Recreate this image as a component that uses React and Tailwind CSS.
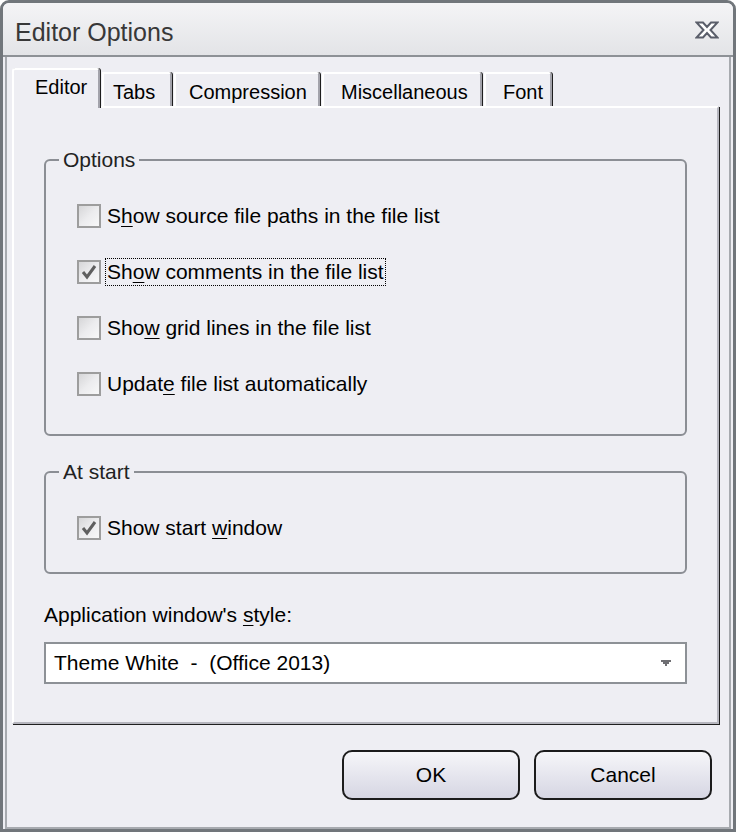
import React from "react";

const tabs = [
  { label: "Editor", w: "w-[88px]", pl: "pl-[21px]", active: true },
  { label: "Tabs", w: "w-[70px]", pl: "pl-[9px]" },
  { label: "Compression", w: "w-[146px]", pl: "pl-[13px]" },
  { label: "Miscellaneous", w: "w-[160px]", pl: "pl-[17px]" },
  { label: "Font", w: "w-[68px]", pl: "pl-[17px]" },
];

const options = [
  { pre: "S", key: "h", post: "ow source file paths in the file list", checked: false },
  { pre: "Sh", key: "o", post: "w comments in the file list", checked: true, focus: true },
  { pre: "Sho", key: "w", post: " grid lines in the file list", checked: false },
  { pre: "Updat", key: "e", post: " file list automatically", checked: false },
];

function CheckBox({ checked }) {
  return (
    <span className="w-[24px] h-[24px] shrink-0 border-2 border-[#9d9d9d] bg-linear-to-br from-[#d6d6d8] via-[#ececee] to-[#f8f8f8] flex items-center justify-center">
      {checked && (
        <svg width="18" height="18" viewBox="0 0 18 18">
          <path d="M3 9 L7 14 L15 3" stroke="#5f5f5f" strokeWidth="3" fill="none" />
        </svg>
      )}
    </span>
  );
}

function Row({ item }) {
  return (
    <div className="h-[56px] flex items-center pl-[31px]">
      <CheckBox checked={item.checked} />
      <span
        className={`ml-[4px] px-[1px] leading-[26px] border ${
          item.focus ? "border-dotted border-black" : "border-transparent"
        }`}
      >
        {item.pre}
        <u className="underline decoration-1 underline-offset-[3px]">{item.key}</u>
        {item.post}
      </span>
    </div>
  );
}

function Group({ title, className, children }) {
  return (
    <fieldset className={`border-2 border-[#8b8e94] rounded-[6px] ${className}`}>
      <legend className="ml-[13px] px-[4px] leading-[24px] text-[#222]">{title}</legend>
      {children}
    </fieldset>
  );
}

export default function App() {
  return (
    <div className="w-[736px] h-[832px] font-['Liberation_Sans',Arial,sans-serif] text-[21px] text-black">
      <div className="w-full h-full border-[3px] border-[#71767b] rounded-t-[9px] flex flex-col overflow-hidden bg-[#eeeef3]">
        {/* title bar */}
        <div className="h-[54px] shrink-0 flex items-center justify-between pl-[12px] pr-[14px] pt-[8px] border-b-2 border-[#8d9196] bg-linear-to-b from-[#f4f4f6] to-[#e3e4e7]">
          <span className="text-[25px] text-[#383838]">Editor Options</span>
          <svg width="24" height="18" viewBox="0 0 24 18" className="mt-[-7px]">
            <path
              d="M1.5 1.5 H8 L12 6 L16 1.5 H22.5 L15.5 9 L22.5 16.5 H16 L12 12 L8 16.5 H1.5 L8.5 9 Z"
              fill="#ffffff"
              stroke="#5a5e6a"
              strokeWidth="2"
            />
          </svg>
        </div>

        {/* body */}
        <div className="flex-1 flex flex-col mx-[2px] border-x-2 border-b-2 border-[#a7aaaf] pt-[11px] pl-[5px]">
          {/* tab strip */}
          <div className="h-[38px] flex items-end gap-[2px] text-[20px]">
            {tabs.map((t) =>
              t.active ? (
                <div
                  key={t.label}
                  className={`${t.w} ${t.pl} h-[40px] -mb-[2px] relative z-10 bg-[#eeeef3] border-l-2 border-t-2 border-white border-r-2 border-r-[#a3a3ab] rounded-tl-[3px] rounded-tr-[3px] shadow-[1px_0_0_#1e1e1e] flex items-center pb-[4px]`}
                >
                  {t.label}
                </div>
              ) : (
                <div
                  key={t.label}
                  className={`${t.w} ${t.pl} h-[34px] bg-[#eeeef3] border-l-2 border-t-2 border-white border-r-2 border-r-[#a3a3ab] rounded-tr-[3px] shadow-[1px_0_0_#1e1e1e] flex items-center pt-[3px]`}
                >
                  {t.label}
                </div>
              )
            )}
          </div>

          {/* tab panel */}
          <div className="w-[707px] h-[618px] border-l-2 border-t-2 border-white border-r-2 border-b-2 border-r-[#b6b6be] border-b-[#b6b6be] shadow-[1px_1px_0_#1e1e1e] px-[30px] pt-[40px]">
            <Group title="Options" className="h-[288px] pt-[16px]">
              {options.map((o) => (
                <Row key={o.pre + o.key} item={o} />
              ))}
            </Group>

            <Group title="At start" className="mt-[24px] h-[114px] pt-[16px]">
              <div className="h-[56px] flex items-center pl-[31px]">
                <CheckBox checked />
                <span className="ml-[4px] px-[1px] leading-[26px] border border-transparent">
                  Show start <u className="underline decoration-1 underline-offset-[3px]">w</u>indow
                </span>
              </div>
            </Group>

            <div className="mt-[29px] leading-[24px]">
              Application window's <u className="underline decoration-1 underline-offset-[3px]">s</u>tyle:
            </div>

            <div className="mt-[15px] h-[42px] bg-white border-2 border-[#8d9196] flex items-center justify-between pl-[8px] pr-[14px]">
              <span className="whitespace-pre">Theme White  -  (Office 2013)</span>
              <svg width="10" height="7" viewBox="0 0 10 7">
                <path d="M0 0h10v2H8v2H6v2H4V4H2V2H0z" fill="#6f6f73" />
              </svg>
            </div>
          </div>

          {/* buttons */}
          <div className="mt-[26px] flex justify-end gap-[14px] pr-[17px]">
            {["OK", "Cancel"].map((b) => (
              <button
                key={b}
                className="w-[178px] h-[50px] border-2 border-[#1c1c1c] rounded-[10px] bg-linear-to-b from-[#f6f6f9] to-[#d6d6e3] flex items-center justify-center text-[21px]"
              >
                {b}
              </button>
            ))}
          </div>
        </div>
      </div>
    </div>
  );
}
